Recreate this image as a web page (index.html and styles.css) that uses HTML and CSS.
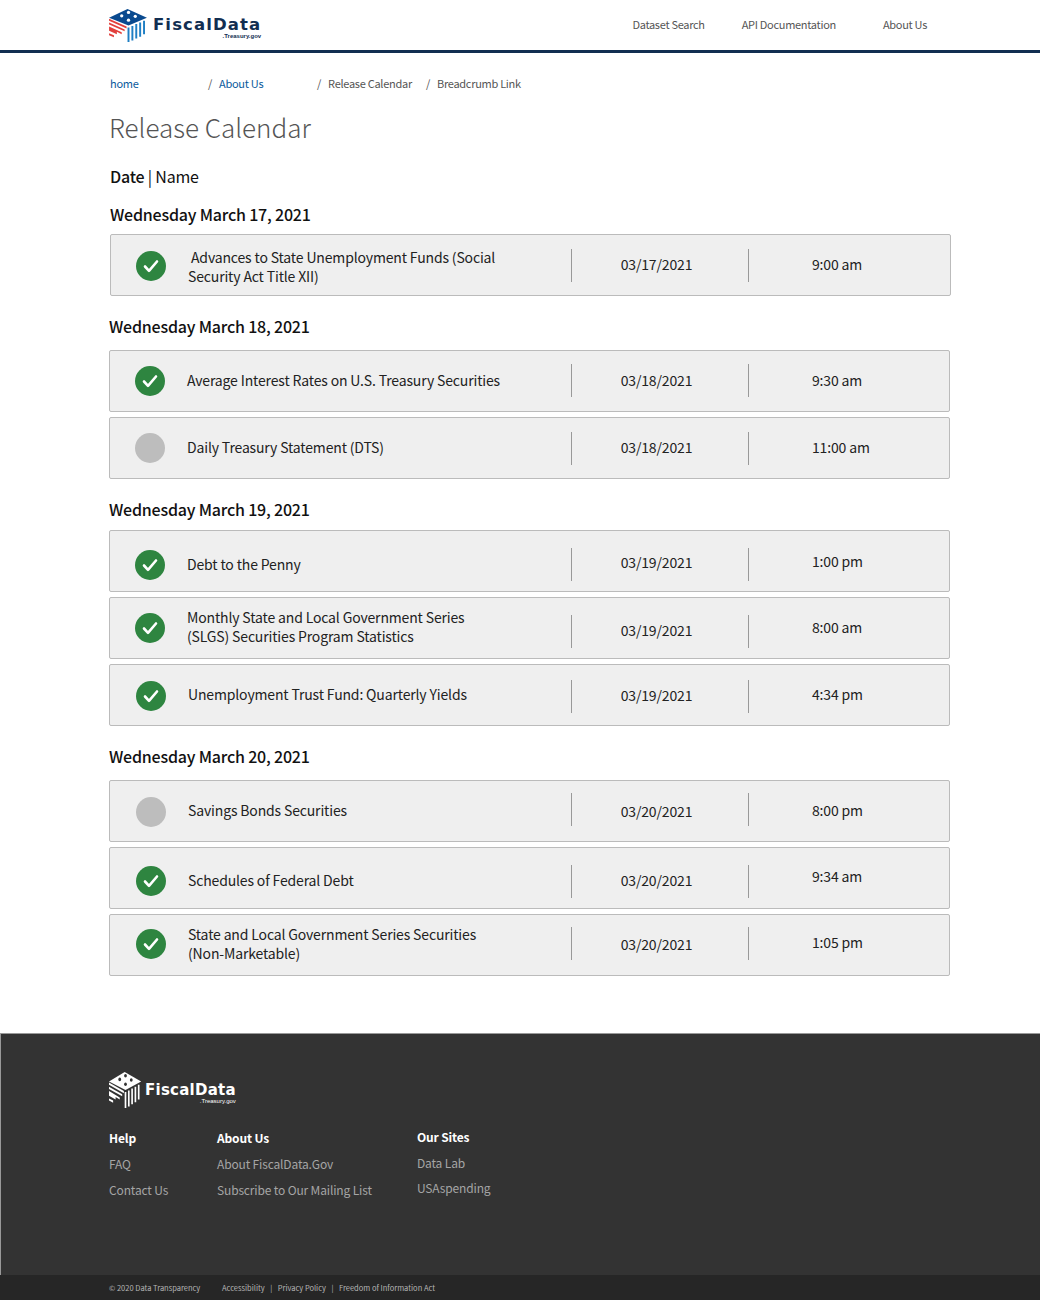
FILE: index.html
```html
<!DOCTYPE html>
<html lang="en">
<head>
    <meta charset="UTF-8">
    <meta name="viewport" content="width=device-width, initial-scale=1.0">
    <title>Release Calendar</title>
    <link rel="stylesheet" href="styles.css">
</head>
<body>
    <header class="site-header">
        <a class="logo" href="#">
            <svg class="logo-mark" viewBox="0 0 40 34" width="39" height="33">
                <polygon points="0,9 19,0 39,9 20,17" fill="#0a4a8f"/>
                <g fill="#fff">
                    <circle cx="13" cy="7" r="1.7"/><circle cx="20" cy="3.500" r="1.7"/>
                    <circle cx="27" cy="7.500" r="1.7"/><circle cx="20" cy="11.500" r="1.7"/>
                </g>
                <g fill="#e2403c">
                    <polygon points="0,10 18,18 18,20 0,12"/>
                    <polygon points="0,14 16,21 16,23 0,16"/>
                    <polygon points="0,18 13,24 13,26 8,23.500 8,26 0,22.500"/>
                    <polygon points="0,25 5,27 5,29 0,27"/>
                </g>
                <g stroke="#1f7fc4" stroke-width="2">
                    <path d="M20 19v15M24 17.500v15M28 15.500v15M32 14v14.500M36 12v14"/>
                </g>
            </svg>
            <span class="logo-text">FiscalData<small>.Treasury.gov</small></span>
        </a>
        <nav class="main-nav">
            <a href="#">Dataset Search</a>
            <a href="#">API Documentation</a>
            <a href="#">About Us</a>
        </nav>
    </header>

    <main class="content">
        <div class="breadcrumb">
            <a class="crumb-home" href="#">home</a>
            <span class="crumb-about"><i>/</i><a href="#">About Us</a></span>
            <span><i>/</i>Release Calendar</span>
            <span><i>/</i>Breadcrumb Link</span>
        </div>
        <h1>Release Calendar</h1>
        <p class="sort"><b>Date</b> | Name</p>

        <section class="day day-first">
            <h2>Wednesday March 17, 2021</h2>
            <div class="row">
                <span class="status done dn1"><svg viewBox="0 0 30 30"><path d="M9 15.500l4 4.300L21 10.500"/></svg></span>
                <div class="row-name dn2"><span class="indent">Advances to State Unemployment Funds (Social</span><br>Security Act Title XII)</div>
                <span class="divider"></span>
                <div class="row-date">03/17/2021</div>
                <span class="divider"></span>
                <div class="row-time">9:00 am</div>
            </div>
        </section>

        <section class="day">
            <h2>Wednesday March 18, 2021</h2>
            <div class="row">
                <span class="status done"><svg viewBox="0 0 30 30"><path d="M9 15.500l4 4.300L21 10.500"/></svg></span>
                <div class="row-name">Average Interest Rates on U.S. Treasury Securities</div>
                <span class="divider up1"></span>
                <div class="row-date">03/18/2021</div>
                <span class="divider up1"></span>
                <div class="row-time">9:30 am</div>
            </div>
            <div class="row">
                <span class="status"></span>
                <div class="row-name">Daily Treasury Statement (DTS)</div>
                <span class="divider"></span>
                <div class="row-date">03/18/2021</div>
                <span class="divider"></span>
                <div class="row-time">11:00 am</div>
            </div>
        </section>

        <section class="day day-tight">
            <h2>Wednesday March 19, 2021</h2>
            <div class="row">
                <span class="status done dn4"><svg viewBox="0 0 30 30"><path d="M9 15.500l4 4.300L21 10.500"/></svg></span>
                <div class="row-name dn4">Debt to the Penny</div>
                <span class="divider dn3"></span>
                <div class="row-date dn2">03/19/2021</div>
                <span class="divider dn3"></span>
                <div class="row-time dn1">1:00 pm</div>
            </div>
            <div class="row">
                <span class="status done"><svg viewBox="0 0 30 30"><path d="M9 15.500l4 4.300L21 10.500"/></svg></span>
                <div class="row-name up1">Monthly State and Local Government Series<br>(SLGS) Securities Program Statistics</div>
                <span class="divider dn3"></span>
                <div class="row-date dn3">03/19/2021</div>
                <span class="divider dn3"></span>
                <div class="row-time">8:00 am</div>
            </div>
            <div class="row row-in">
                <span class="status done dn1"><svg viewBox="0 0 30 30"><path d="M9 15.500l4 4.300L21 10.500"/></svg></span>
                <div class="row-name">Unemployment Trust Fund: Quarterly Yields</div>
                <span class="divider dn1"></span>
                <div class="row-date dn1">03/19/2021</div>
                <span class="divider dn1"></span>
                <div class="row-time">4:34 pm</div>
            </div>
        </section>

        <section class="day">
            <h2>Wednesday March 20, 2021</h2>
            <div class="row row-in">
                <span class="status dn1"></span>
                <div class="row-name">Savings Bonds Securities</div>
                <span class="divider up2"></span>
                <div class="row-date dn1">03/20/2021</div>
                <span class="divider up2"></span>
                <div class="row-time">8:00 pm</div>
            </div>
            <div class="row row-in">
                <span class="status done dn3"><svg viewBox="0 0 30 30"><path d="M9 15.500l4 4.300L21 10.500"/></svg></span>
                <div class="row-name dn3">Schedules of Federal Debt</div>
                <span class="divider dn3"></span>
                <div class="row-date dn3">03/20/2021</div>
                <span class="divider dn3"></span>
                <div class="row-time up1">9:34 am</div>
            </div>
            <div class="row row-in">
                <span class="status done up1"><svg viewBox="0 0 30 30"><path d="M9 15.500l4 4.300L21 10.500"/></svg></span>
                <div class="row-name up1">State and Local Government Series Securities<br>(Non-Marketable)</div>
                <span class="divider up2"></span>
                <div class="row-date">03/20/2021</div>
                <span class="divider up2"></span>
                <div class="row-time up2">1:05 pm</div>
            </div>
        </section>
    </main>

    <footer class="site-footer">
        <div class="footer-main">
            <a class="logo logo-white" href="#">
                <svg class="logo-mark" viewBox="0 0 40 34" width="33" height="36" preserveAspectRatio="none">
                    <polygon points="0,9 19,0 39,9 20,17" fill="#fff"/>
                    <g fill="#333">
                        <circle cx="13" cy="7" r="1.7"/><circle cx="20" cy="3.500" r="1.7"/>
                        <circle cx="27" cy="7.500" r="1.7"/><circle cx="20" cy="11.500" r="1.7"/>
                    </g>
                    <g fill="#fff">
                        <polygon points="0,10 18,18 18,20 0,12"/>
                        <polygon points="0,14 16,21 16,23 0,16"/>
                        <polygon points="0,18 13,24 13,26 8,23.500 8,26 0,22.500"/>
                        <polygon points="0,25 5,27 5,29 0,27"/>
                    </g>
                    <g stroke="#fff" stroke-width="2">
                        <path d="M20 19v15M24 17.500v15M28 15.500v15M32 14v14.500M36 12v14"/>
                    </g>
                </svg>
                <span class="logo-text">FiscalData<small>.Treasury.gov</small></span>
            </a>
            <div class="footer-cols">
                <div class="footer-col col-help">
                    <h3>Help</h3>
                    <a href="#">FAQ</a>
                    <a href="#">Contact Us</a>
                </div>
                <div class="footer-col col-about">
                    <h3>About Us</h3>
                    <a href="#">About FiscalData.Gov</a>
                    <a href="#">Subscribe to Our Mailing List</a>
                </div>
                <div class="footer-col col-sites">
                    <h3>Our Sites</h3>
                    <a href="#">Data Lab</a>
                    <a href="#">USAspending</a>
                </div>
            </div>
        </div>
        <div class="footer-bottom">
            <span class="copyright">© 2020 Data Transparency</span>
            <a href="#">Accessibility</a><i>|</i><a href="#">Privacy Policy</a><i>|</i><a href="#">Freedom of Information Act</a>
        </div>
    </footer>
</body>
</html>
```

FILE: styles.css
```css
body {
    margin: 0;
    font-family: "Noto Sans CJK SC", "Noto Sans", sans-serif;
    color: #111;
    background-color: #fff;
}
a {
    text-decoration: none;
    color: inherit;
}

/* header */
.site-header {
    display: flex;
    justify-content: space-between;
    height: 50px;
    padding: 0 113px 0 109px;
    border-bottom: 3px solid #122e51;
}
.logo {
    display: flex;
    align-items: center;
    color: #122e51;
}
.logo-mark {
    flex: none;
    margin-right: 5px;
}
.logo-text {
    position: relative;
    font-family: "DejaVu Sans", sans-serif;
    font-size: 16.500px;
    font-weight: bold;
    letter-spacing: 1.100px;
    line-height: 14px;
}
.logo-text small {
    position: absolute;
    right: 0;
    top: 100%;
    margin-top: 1px;
    font-family: "Liberation Sans", sans-serif;
    font-size: 6px;
    letter-spacing: 0;
    line-height: 6px;
}
.main-nav {
    display: flex;
    align-items: center;
    gap: 37px;
    padding-bottom: 2px;
    font-size: 11px;
    letter-spacing: -0.3px;
    line-height: 16px;
    color: #555;
}
.main-nav a:last-child {
    margin-left: 10px;
}

/* page */
.content {
    padding: 0 90px 52px 109px;
}
.breadcrumb {
    display: flex;
    padding: 22px 0 0 1px;
    font-size: 11px;
    letter-spacing: -0.28px;
    line-height: 16px;
    color: #555;
}
.breadcrumb a {
    color: #0a5a9c;
}
.breadcrumb i {
    font-style: normal;
    margin-right: 7px;
}
.breadcrumb span {
    margin-right: 14px;
}
.crumb-home {
    width: 98px;
}
.crumb-about {
    width: 95px;
}
h1 {
    margin: 15px 0 0;
    font-size: 26px;
    font-weight: 300;
    line-height: 42px;
    color: #555;
}
.sort {
    margin: 16px 0 0 1px;
    font-size: 16px;
    letter-spacing: -0.2px;
    line-height: 24px;
}
.sort b {
    font-weight: 500;
}
.day {
    margin-top: 18px;
}
.day h2 {
    margin: 0 0 12px;
    font-size: 16px;
    font-weight: 500;
    letter-spacing: -0.2px;
    line-height: 24px;
}
.day-first {
    margin-top: 14px;
    margin-left: 1px;
    margin-right: -1px;
}
.day-first h2 {
    margin-bottom: 8px;
}
.day-tight h2 {
    margin-bottom: 9px;
}

/* rows */
.row {
    box-sizing: border-box;
    display: flex;
    align-items: center;
    height: 62px;
    margin-bottom: 5px;
    border: 1px solid #bbb;
    border-radius: 2px;
    background-color: #efefef;
    font-size: 14px;
    letter-spacing: -0.15px;
    line-height: 19.500px;
    color: #222;
}
.status {
    flex: none;
    width: 30px;
    height: 30px;
    margin-left: 25px;
    border-radius: 50%;
    background-color: #bdbdbd;
}
.status.done {
    background-color: #2e8540;
}
.status svg {
    display: block;
    fill: none;
    stroke: #fff;
    stroke-width: 2.600;
    stroke-linecap: round;
    stroke-linejoin: round;
}
.row-name {
    flex: none;
    box-sizing: border-box;
    width: 406px;
    padding-left: 22px;
}
.day-first .row-name,
.row-in .row-name {
    width: 405px;
}
.row-in .status {
    margin-left: 26px;
}
.indent {
    padding-left: 3px;
}
.divider {
    flex: none;
    width: 1px;
    height: 33px;
    background-color: #999;
}
.row-date {
    flex: none;
    box-sizing: border-box;
    width: 176px;
    padding-right: 7px;
    text-align: center;
}
.row-time {
    padding-left: 63px;
}

/* small vertical offsets, the rows in this list don't line up exactly */
.dn1 { margin-top: 2px; }
.dn2 { margin-top: 4px; }
.dn3 { margin-top: 6px; }
.dn4 { margin-top: 8px; }
.up1 { margin-bottom: 2px; }
.up2 { margin-bottom: 4px; }

/* footer */
.site-footer {
    background-color: #333;
    color: #a5a5a5;
}
.footer-main {
    box-sizing: border-box;
    height: 242px;
    padding: 38px 0 0 108px;
    border-top: 1px solid #999;
    border-left: 1px solid #999;
}
.logo-white {
    color: #fff;
}
.logo-white .logo-mark {
    margin-right: 3px;
}
.logo-white .logo-text {
    font-size: 15px;
    letter-spacing: 0.25px;
    line-height: 12px;
}
.logo-white .logo-text small {
    margin-top: 2px;
    font-size: 6px;
    font-weight: normal;
}
.footer-cols {
    display: flex;
    margin-top: 20px;
    font-size: 12px;
    letter-spacing: -0.15px;
    line-height: 20px;
}
.footer-col h3 {
    margin: 0;
    font-size: 12px;
    font-weight: 700;
    line-height: 20px;
    color: #fff;
}
.footer-col a {
    display: block;
    margin-top: 6px;
}
.col-help {
    width: 108px;
}
.col-about {
    width: 200px;
}
.col-sites {
    margin-top: -1px;
}
.col-sites a + a {
    margin-top: 5px;
}
.footer-bottom {
    height: 25px;
    padding-left: 109px;
    background-color: #262626;
    font-size: 7.500px;
    line-height: 26px;
    color: #b5b5b5;
}
.copyright {
    margin-right: 20px;
}
.footer-bottom i {
    font-style: normal;
    margin: 0 5.500px;
}
```
